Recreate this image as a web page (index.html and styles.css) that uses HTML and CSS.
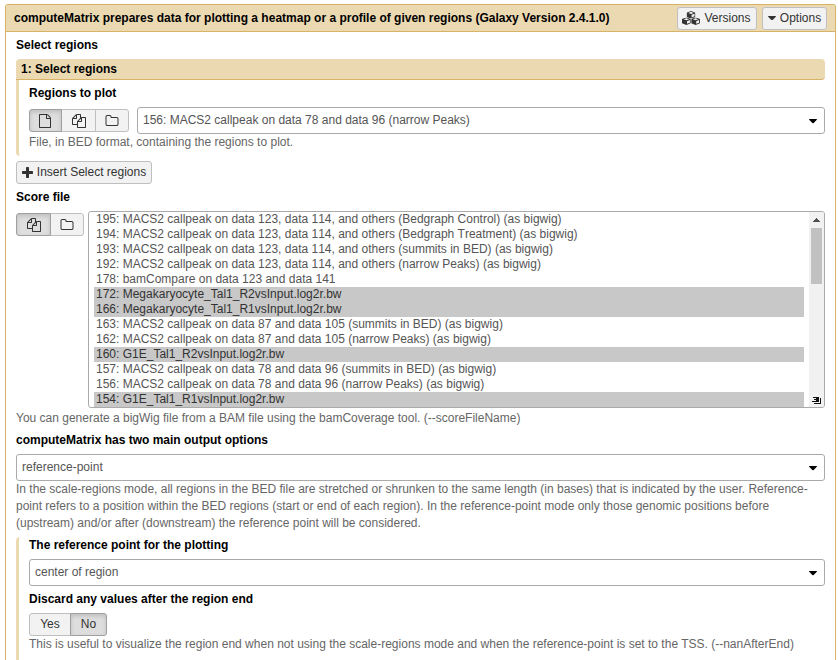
FILE: index.html
```html
<!DOCTYPE html>
<html lang="en">
<head>
<meta charset="utf-8">
<title>computeMatrix</title>
<link rel="stylesheet" href="styles.css">
</head>
<body>
<svg class="defs" aria-hidden="true">
  <symbol id="file" viewBox="0 0 1792 1792"><path d="M1596 380q28 28 48 76t20 88v1152q0 40-28 68t-68 28h-1344q-40 0-68-28t-28-68v-1600q0-40 28-68t68-28h896q40 0 88 20t76 48zm-444-244v376h376q-10-29-22-41l-313-313q-12-12-41-22zm384 1528v-1024h-416q-40 0-68-28t-28-68v-416h-768v1536h1280z"/></symbol>
  <symbol id="files" viewBox="0 0 1792 1792"><path d="M1696 384q40 0 68 28t28 68v1216q0 40-28 68t-68 28h-960q-40 0-68-28t-28-68v-288h-544q-40 0-68-28t-28-68v-672q0-40 20-88t48-76l408-408q28-28 76-48t88-20h416q40 0 68 28t28 68v328q68-40 128-40h416zm-544 213l-299 299h299v-299zm-640-384l-299 299h299v-299zm196 647l316-316v-416h-384v416q0 40-28 68t-68 28h-416v640h512v-256q0-40 20-88t48-76zm956 804v-1152h-384v416q0 40-28 68t-68 28h-416v640h896z"/></symbol>
  <symbol id="folder" viewBox="0 0 1792 1792"><path d="M1600 1312v-704q0-40-28-68t-68-28h-704q-40 0-68-28t-28-68v-64q0-40-28-68t-68-28h-320q-40 0-68 28t-28 68v960q0 40 28 68t68 28h1216q40 0 68-28t28-68zm128-704v704q0 92-66 158t-158 66h-1216q-92 0-158-66t-66-158v-960q0-92 66-158t158-66h320q92 0 158 66t66 158v32h672q92 0 158 66t66 158z"/></symbol>
  <symbol id="plus" viewBox="192 128 1408 1408"><path d="M1600 736v192q0 40-28 68t-68 28h-416v416q0 40-28 68t-68 28h-192q-40 0-68-28t-28-68v-416h-416q-40 0-68-28t-28-68v-192q0-40 28-68t68-28h416v-416q0-40 28-68t68-28h192q40 0 68 28t28 68v416h416q40 0 68 28t28 68z"/></symbol>
  <symbol id="cube" viewBox="0 0 9 8" preserveAspectRatio="none"><path fill-rule="evenodd" d="M4.5 0 8.4 1.5Q9 1.8 9 2.4V5.6Q9 6.2 8.4 6.5L4.5 8 .6 6.5Q0 6.2 0 5.6V2.4Q0 1.8.6 1.5ZM4.5 .9 1.7 2 4.5 3.1 7.3 2ZM5.1 4V6.8L8.1 5.5V2.8Z"/></symbol>
  <symbol id="cubes" viewBox="0 0 18 14"><use href="#cube" x="4.6" y="0" width="8.8" height="7.6"/><use href="#cube" x="0" y="6.4" width="8.8" height="7.6"/><use href="#cube" x="9.2" y="6.4" width="8.8" height="7.6"/></symbol>
  <symbol id="caret" viewBox="0 0 9 5"><path d="M.5 0h8q.8.2.3.8L5 4.7q-.5.4-1 0L.2.8Q-.3.2.5 0z"/></symbol>
</svg>
<div class="panel">
  <header class="head">
    <h1>computeMatrix prepares data for plotting a heatmap or a profile of given regions (Galaxy Version 2.4.1.0)</h1>
    <button class="btn versions"><svg class="i-cubes"><use href="#cubes"/></svg>Versions</button>
    <button class="btn options"><svg class="i-caret"><use href="#caret"/></svg>Options</button>
  </header>
  <main class="body">
    <div class="label first">Select regions</div>
    <section class="repeat">
      <h2>1: Select regions</h2>
      <div class="repeat-body">
        <div class="label plot">Regions to plot</div>
        <div class="row">
          <div class="group">
            <button class="btn b1 active"><svg><use href="#file"/></svg></button>
            <button class="btn b2"><svg><use href="#files"/></svg></button>
            <button class="btn b3"><svg><use href="#folder"/></svg></button>
          </div>
          <div class="select">156: MACS2 callpeak on data 78 and data 96 (narrow Peaks)<svg class="arrow"><use href="#caret"/></svg></div>
        </div>
        <p class="help">File, in BED format, containing the regions to plot.</p>
      </div>
    </section>
    <button class="btn insert"><svg class="i-plus"><use href="#plus"/></svg>Insert Select regions</button>
    <div class="label score">Score file</div>
    <div class="row top">
      <div class="group two">
        <button class="btn b4 active"><svg><use href="#files"/></svg></button>
        <button class="btn b5"><svg><use href="#folder"/></svg></button>
      </div>
      <div class="listbox">
        <ul>
          <li class="unkerned">195: MACS2 callpeak on data 123, data 114, and others (Bedgraph Control) (as bigwig)</li>
          <li class="unkerned">194: MACS2 callpeak on data 123, data 114, and others (Bedgraph Treatment) (as bigwig)</li>
          <li class="unkerned">193: MACS2 callpeak on data 123, data 114, and others (summits in BED) (as bigwig)</li>
          <li class="unkerned">192: MACS2 callpeak on data 123, data 114, and others (narrow Peaks) (as bigwig)</li>
          <li>178: bamCompare on data 123 and data 141</li>
          <li class="sel">172: Megakaryocyte_Tal1_R2vsInput.log2r.bw</li>
          <li class="sel">166: Megakaryocyte_Tal1_R1vsInput.log2r.bw</li>
          <li>163: MACS2 callpeak on data 87 and data 105 (summits in BED) (as bigwig)</li>
          <li>162: MACS2 callpeak on data 87 and data 105 (narrow Peaks) (as bigwig)</li>
          <li class="sel">160: G1E_Tal1_R2vsInput.log2r.bw</li>
          <li>157: MACS2 callpeak on data 78 and data 96 (summits in BED) (as bigwig)</li>
          <li>156: MACS2 callpeak on data 78 and data 96 (narrow Peaks) (as bigwig)</li>
          <li class="sel">154: G1E_Tal1_R1vsInput.log2r.bw</li>
        </ul>
        <div class="scroll">
          <svg class="up" viewBox="0 0 7 4"><path d="M3 0h1v1h1v1h1v1h1v1H0V3h1V2h1V1h1z"/></svg>
          <div class="thumb"></div>
          <svg class="grip" viewBox="0 0 10 9"><path d="M1 1h5v1H1zM4 1h2v4H4zM2 3h3v1H2zM0 5h6v1H0zM6 1h1v5H6zM8 2h1v6H8zM2 7h7v1H2z"/></svg>
        </div>
      </div>
    </div>
    <p class="help score-help">You can generate a bigWig file from a BAM file using the bamCoverage tool. (--scoreFileName)</p>
    <div class="label output">computeMatrix has two main output options</div>
    <div class="select">reference-point<svg class="arrow"><use href="#caret"/></svg></div>
    <p class="help">In the scale-regions mode, all regions in the BED file are stretched or shrunken to the same length (in bases) that is indicated by the user. Reference-<br>point refers to a position within the BED regions (start or end of each region). In the reference-point mode only those genomic positions before<br>(upstream) and/or after (downstream) the reference point will be considered.</p>
    <section class="nested">
      <div class="label ref">The reference point for the plotting</div>
      <div class="select">center of region<svg class="arrow"><use href="#caret"/></svg></div>
      <div class="label discard">Discard any values after the region end</div>
      <div class="group">
        <button class="btn yes">Yes</button>
        <button class="btn no active">No</button>
      </div>
      <p class="help">This is useful to visualize the region end when not using the scale-regions mode and when the reference-point is set to the TSS. (--nanAfterEnd)</p>
    </section>
  </main>
</div>
</body>
</html>
```
FILE: styles.css
```css
* { box-sizing: border-box; }
html, body { height: 100%; }
body {
  margin: 0;
  padding: 4px 2px 0 5px;
  overflow: hidden;
  background: #fff;
  color: #555;
  font: 12px/17px "Liberation Sans", Arial, sans-serif;
}
.defs { position: absolute; width: 0; height: 0; }
h1, h2, p, ul { margin: 0; padding: 0; }
svg { display: block; flex: none; width: 14px; height: 14px; fill: currentColor; }

.panel {
  height: 656px;
  border: 1px solid #d8b365;
  border-bottom: 0;
  border-radius: 3px 3px 0 0;
  overflow: hidden;
}
.head {
  display: flex;
  align-items: center;
  height: 27px;
  padding: 0 8px;
  background: #ebd9b2;
  border-bottom: 1px solid #d8b365;
}
h1 { flex: 1; white-space: nowrap; font-size: 12px; line-height: 17px; color: #000; }
.body { padding: 0 10px; }

.btn {
  display: flex;
  align-items: center;
  justify-content: center;
  flex: none;
  height: 23px;
  margin: 0;
  padding: 0;
  border: 1px solid #bfbfbf;
  border-radius: 3px;
  background: #f2f2f2;
  color: #333;
  font: inherit;
}
.btn.active {
  background: #dedede;
  border-color: #a0a0a0;
  box-shadow: inset 0 2px 4px rgba(0, 0, 0, .15);
}
.versions { width: 80px; gap: 4px; margin-right: 5px; padding-right: 1px; }
.options { width: 65px; gap: 4px; }
.i-cubes { width: 18px; height: 14px; }
.i-caret { width: 8px; height: 4.5px; }

.label { height: 17px; color: #000; font-weight: bold; white-space: nowrap; }
.first { margin-top: 5px; }
.repeat { margin-top: 5px; }
.repeat h2 {
  height: 21px;
  padding: 2px 5px 0;
  background: #ebd9b2;
  border-bottom: 1px solid #d8b365;
  border-radius: 4px 4px 4px 0;
  color: #000;
  font-size: 12px;
  line-height: 17px;
}
.repeat-body { height: 76px; padding: 5px 0 0 10px; border-left: 3px solid #ebd9b2; border-radius: 0 0 0 4px; }
.row { display: flex; align-items: center; gap: 8px; }
.row.top { align-items: flex-start; gap: 4px; }
.plot { margin-bottom: 5px; }
.group { display: flex; }
.group .btn + .btn { margin-left: -1px; }
.group .btn { border-radius: 0; position: relative; }
.group .btn.active { z-index: 1; }
.group .btn:first-child { border-radius: 3px 0 0 3px; }
.group .btn:last-child { border-radius: 0 3px 3px 0; }
.b1 { width: 33px; }
.b1 svg { margin-right: 1px; }
.b2 { width: 35px; }
.b3 { width: 34px; }
.b4 { width: 35px; }
.b5 { width: 34px; }
.b2 svg, .b4 svg { margin-left: .5px; }
.two { padding-top: 2px; }
.select {
  display: flex;
  align-items: center;
  justify-content: space-between;
  flex: 1;
  height: 27px;
  padding: 0 7px 0 5px;
  border: 1px solid #aaa;
  border-radius: 3px;
  background: #fff;
}
.arrow { width: 8px; height: 4.5px; margin-top: 2px; color: #000; }
.help { color: #666; white-space: nowrap; }
.insert { width: 136px; gap: 4px; margin-top: 5px; }
.i-plus { width: 11px; height: 11px; }
.score { margin: 5px 0; }

.listbox {
  display: flex;
  flex: 1;
  height: 197px;
  border: 1px solid #aaa;
  border-radius: 3px;
  overflow: hidden;
}
.listbox ul { flex: 1; padding: 0 5px; list-style: none; }
.listbox li { height: 15px; padding-left: 2px; line-height: 15px; white-space: nowrap; }
.listbox .unkerned { font-kerning: none; }
.listbox .sel { background: #c8c8c8; color: #333; }
.scroll { position: relative; width: 15px; background: #f1f1f1; }
.up { width: 7px; height: 4px; margin: 6px 0 0 4px; color: #505050; }
.thumb { width: 11px; height: 56px; margin: 6px 0 0 2px; background: #c1c1c1; }
.grip { position: absolute; right: 2px; bottom: 2px; width: 10px; height: 9px; color: #111; }
.score-help { margin-top: 2px; }
.output { margin: 5px 0; }
.nested { height: 180px; margin-top: 5px; padding: 0 0 0 10px; border-left: 3px solid #ebd9b2; border-radius: 4px 0 0 0; }
.ref { margin-bottom: 5px; }
.discard { margin: 5px 0; }
.yes { width: 42px; }
.no { width: 37px; }
```
